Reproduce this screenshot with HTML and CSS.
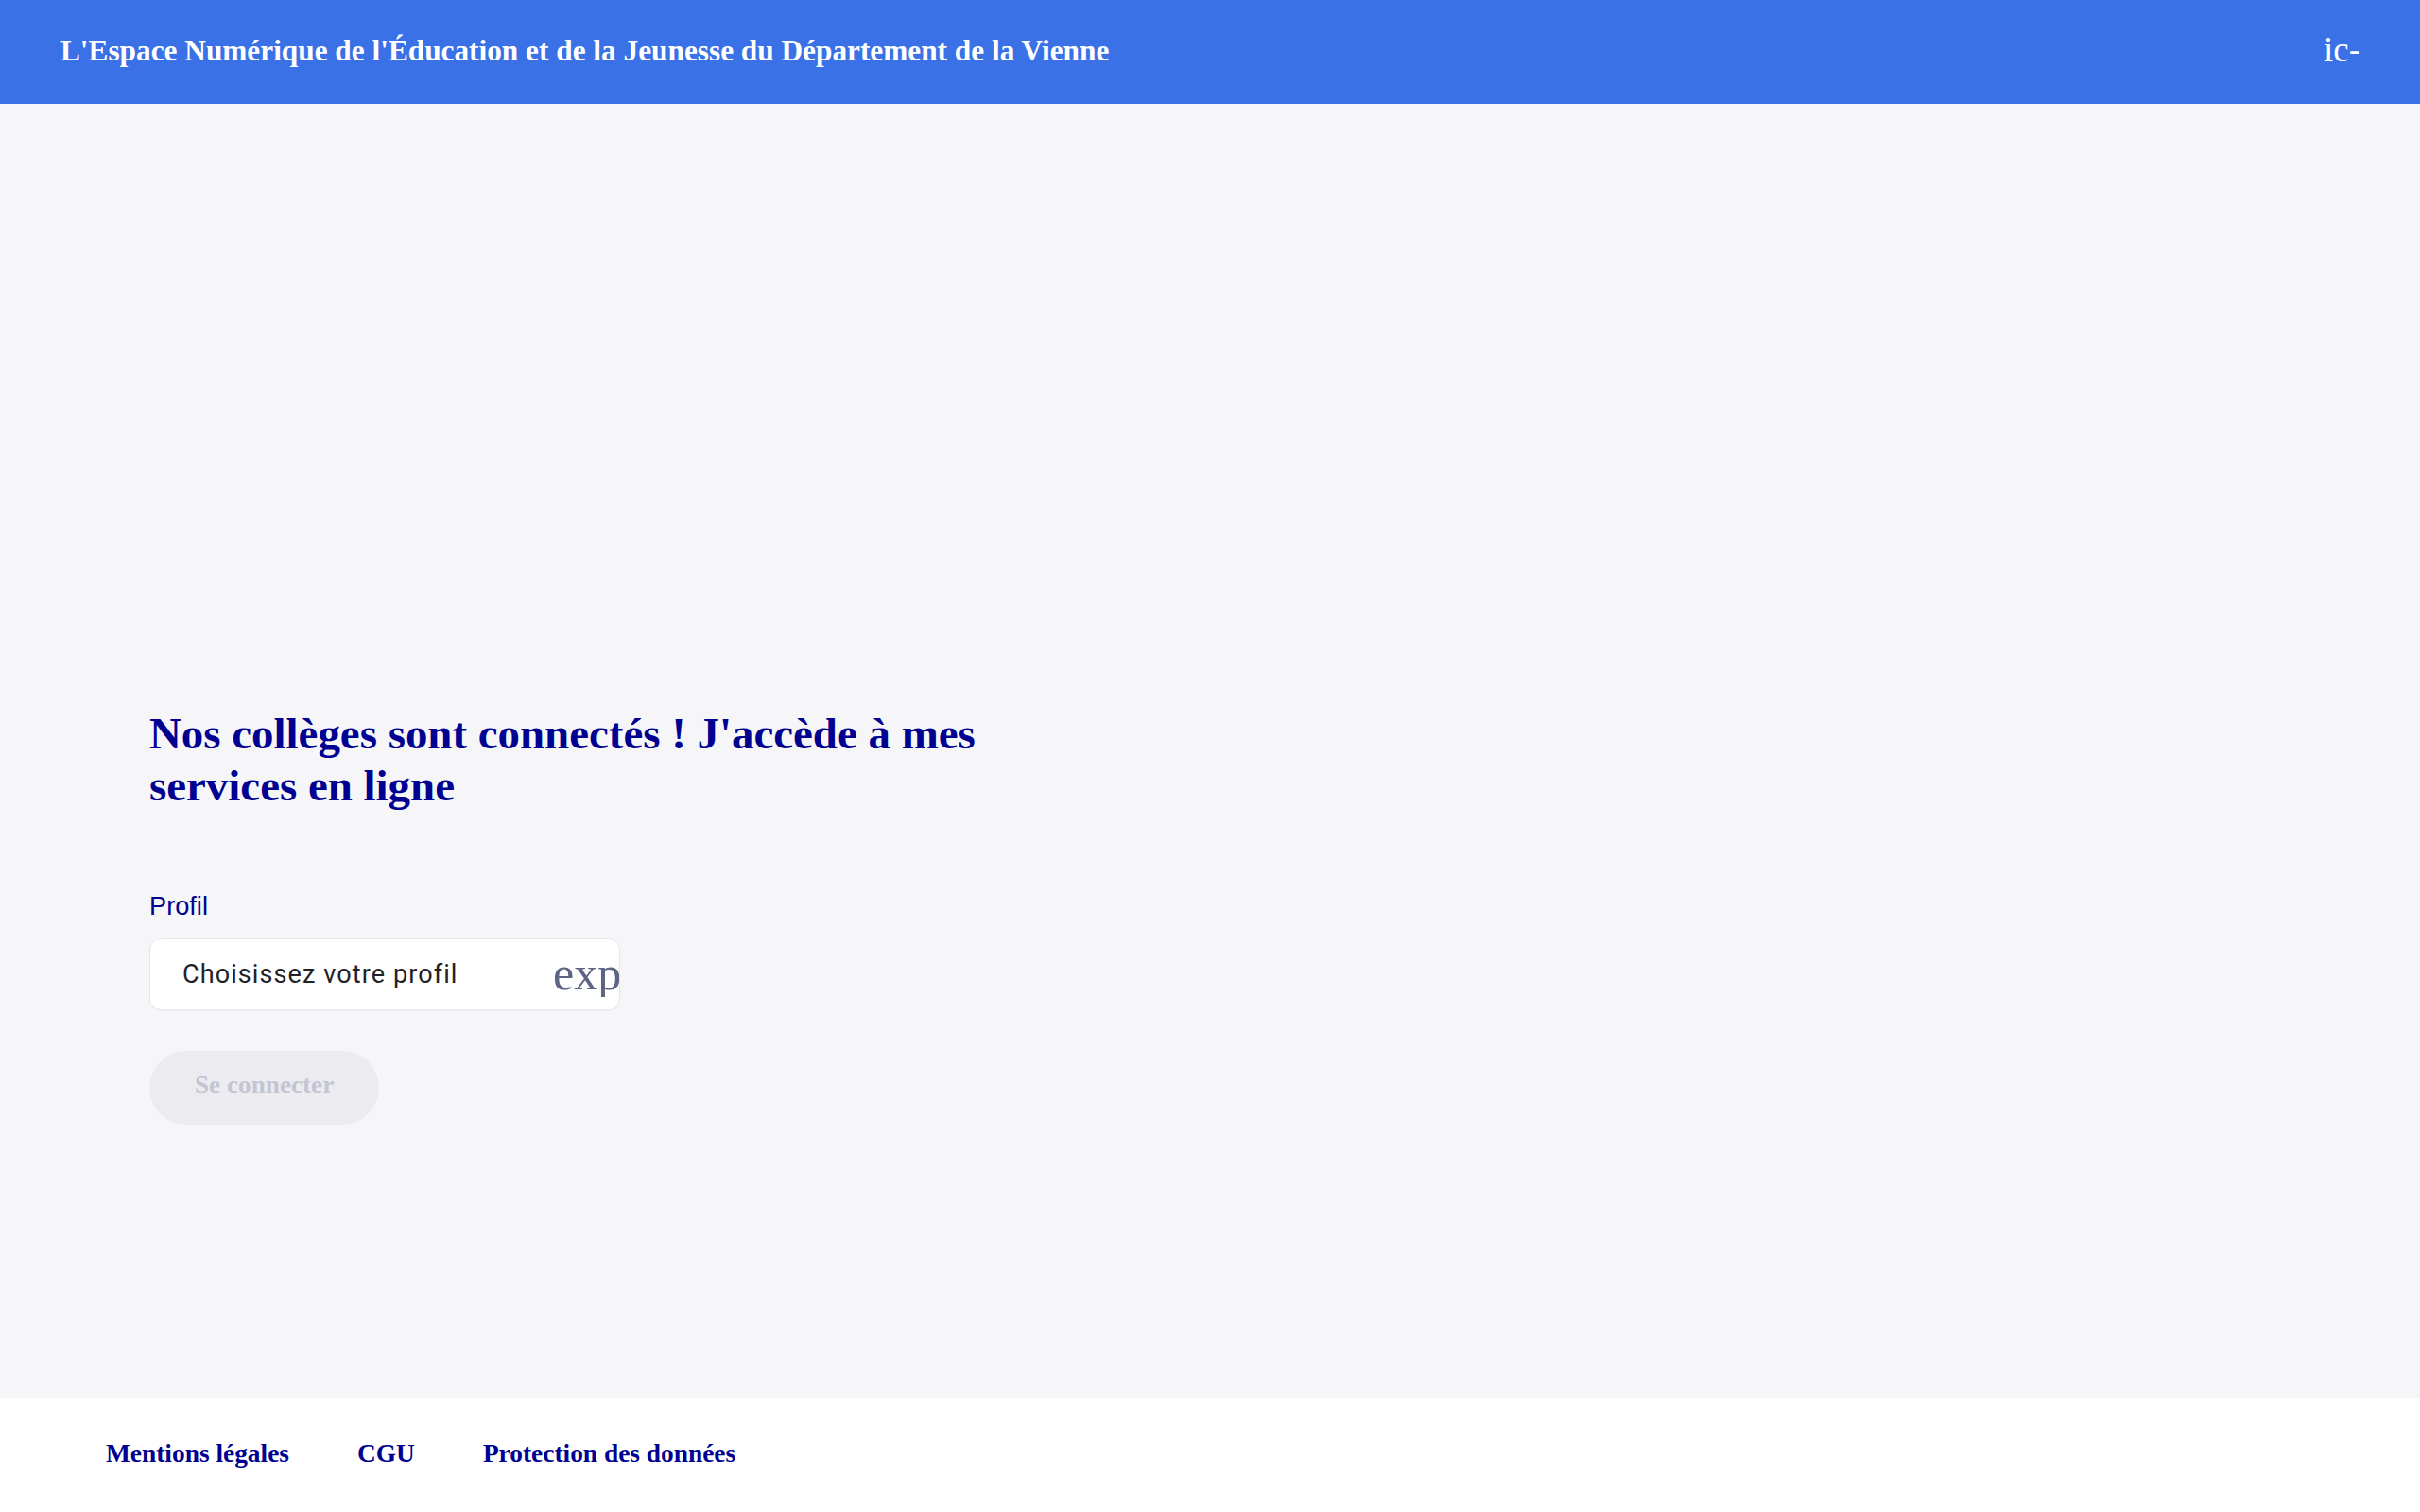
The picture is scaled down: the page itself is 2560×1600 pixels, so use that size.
FILE: index.html
```html
<!DOCTYPE html>
<html lang="fr">
<head>
<meta charset="utf-8">
<title>ENT Vienne</title>
<link rel="stylesheet" href="styles.css">
</head>
<body>
<header class="topbar">
  <span class="topbar-title">L'Espace Numérique de l'Éducation et de la Jeunesse du Département de la Vienne</span>
  <span class="topbar-icon">ic-</span>
</header>
<main class="main">
  <section class="login">
    <h1 class="login-title">Nos collèges sont connectés ! J'accède à mes services en ligne</h1>
    <label class="field-label">Profil</label>
    <div class="select">
      <span class="select-text">Choisissez votre profil</span>
      <span class="select-icon">expand_more</span>
    </div>
    <button class="btn" disabled>Se connecter</button>
  </section>
</main>
<footer class="footer">
  <a class="footer-link">Mentions légales</a>
  <a class="footer-link">CGU</a>
  <a class="footer-link">Protection des données</a>
</footer>
</body>
</html>
```
FILE: styles.css
```css
html, body {
  margin: 0;
  padding: 0;
}
body {
  display: flex;
  flex-direction: column;
  height: 1600px;
  font-family: "Liberation Serif", serif;
  background: #f6f6f8;
}
.topbar {
  height: 110px;
  flex: 0 0 110px;
  box-sizing: border-box;
  background: #3a71e6;
  display: flex;
  align-items: center;
  justify-content: space-between;
  padding: 0 63px 3px 64px;
  color: #ffffff;
}
.topbar-title {
  font-weight: bold;
  font-size: 31.3px;
}
.topbar-icon {
  font-size: 37px;
  line-height: 1;
  margin-bottom: 3px;
}
.main {
  flex: 1 1 auto;
  background: #f6f6f8;
  padding: 639px 0 0 158px;
}
.login {
  display: flex;
  flex-direction: column;
  align-items: flex-start;
  width: 920px;
}
.login-title {
  margin: 0;
  font-size: 46.9px;
  line-height: 55px;
  font-weight: bold;
  color: #000091;
}
.field-label {
  margin-top: 84px;
  font-family: "Liberation Sans", Arial, sans-serif;
  font-size: 27.2px;
  color: #000091;
}
.select {
  margin-top: 18px;
  width: 498px;
  height: 76px;
  box-sizing: border-box;
  background: #ffffff;
  border: 1px solid #e6e7ee;
  border-radius: 12px;
  box-shadow: 0 1px 2px rgba(0, 0, 0, 0.03);
  display: flex;
  align-items: center;
  padding-left: 34px;
  overflow: hidden;
}
.select-text {
  flex: 1 1 auto;
  font-family: Roboto, sans-serif;
  font-size: 27px;
  letter-spacing: 1.1px;
  color: #222226;
}
.select-icon {
  flex: 0 0 70px;
  width: 70px;
  overflow: hidden;
  white-space: nowrap;
  font-family: "Liberation Serif", serif;
  font-size: 50px;
  line-height: 1;
  color: #5e6584;
  margin-bottom: 2px;
}
.btn {
  margin-top: 43px;
  height: 78px;
  box-sizing: border-box;
  padding: 0 48px 6px;
  border: none;
  border-radius: 39px;
  background: #ebebf0;
  font-family: "Liberation Serif", serif;
  font-weight: bold;
  font-size: 27.2px;
  color: #c3c5d3;
}
.footer {
  flex: 0 0 121px;
  height: 121px;
  background: #ffffff;
  display: flex;
  align-items: center;
  gap: 72px;
  padding: 0 0 3px 112px;
  box-sizing: border-box;
}
.footer-link {
  font-weight: bold;
  font-size: 27.4px;
  color: #000091;
  text-decoration: none;
}
```
